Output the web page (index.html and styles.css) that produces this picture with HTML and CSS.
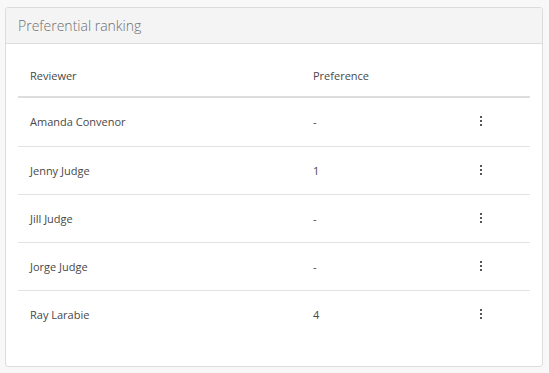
FILE: index.html
```html
<!DOCTYPE html>
<html>
<head>
<meta charset="utf-8">
<link rel="stylesheet" href="styles.css">
</head>
<body>
<div class="card">
  <div class="card-header">Preferential ranking</div>
  <div class="card-body">
    <table class="table">
      <thead>
        <tr><th class="c-name">Reviewer</th><th class="c-pref">Preference</th><th class="c-act"></th></tr>
      </thead>
      <tbody>
        <tr><td>Amanda Convenor</td><td>-</td><td class="c-act"><span class="dots"><i></i><i></i><i></i></span></td></tr>
        <tr><td>Jenny Judge</td><td>1</td><td class="c-act"><span class="dots"><i></i><i></i><i></i></span></td></tr>
        <tr><td>Jill Judge</td><td>-</td><td class="c-act"><span class="dots"><i></i><i></i><i></i></span></td></tr>
        <tr><td>Jorge Judge</td><td>-</td><td class="c-act"><span class="dots"><i></i><i></i><i></i></span></td></tr>
        <tr><td>Ray Larabie</td><td>4</td><td class="c-act"><span class="dots"><i></i><i></i><i></i></span></td></tr>
      </tbody>
    </table>
  </div>
</div>
</body>
</html>
```
FILE: styles.css
```css
html, body {
  margin: 0;
  padding: 0;
  background: #f8f8f8;
  font-family: "Open Sans", "Liberation Sans", sans-serif;
}
body {
  padding: 7px 6px 0 5px;
}
.card {
  width: 536px;
  height: 358px;
  background: #fff;
  border: 1px solid #dcdcdc;
  border-radius: 3px;
  box-sizing: content-box;
}
.card-header {
  height: 36px;
  box-sizing: border-box;
  background: #f4f4f4;
  border-bottom: 1px solid #dddddd;
  border-radius: 3px 3px 0 0;
  padding: 0 12px;
  font-size: 14px;
  font-weight: 300;
  color: #6f6f6f;
  display: flex;
  align-items: center;
}
.card-body {
  padding: 12px 12px 0 12px;
}
.table {
  width: 100%;
  border-collapse: collapse;
  font-size: 11px;
  color: #484848;
}
.table th {
  text-align: left;
  font-weight: 400;
  height: 39px;
  padding: 0 12px 1px;
  border-bottom: 2px solid #dddddd;
  color: #484848;
}
.table td {
  height: 46px;
  padding: 0 12px 1px;
  border-top: 1px solid #e2e2e2;
}
.table tbody tr:first-child td {
  border-top: 0;
  height: 47px;
}
.c-name { width: 259px; }
.c-pref { width: 142px; }
.c-act { text-align: left; padding-left: 0 !important; }
.dots {
  display: inline-flex;
  flex-direction: column;
  gap: 2px;
  vertical-align: middle;
  margin-left: 13px;
  margin-bottom: 3px;
}
.dots i {
  display: block;
  width: 2px;
  height: 2px;
  background: #555;
}
```
